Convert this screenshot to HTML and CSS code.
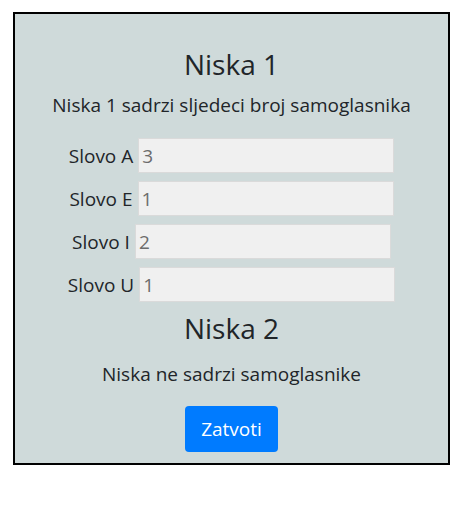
FILE: index.html
```html
<!DOCTYPE html>
<html>
<head>
<meta charset="utf-8">
<link rel="stylesheet" href="styles.css">
</head>
<body>
<div class="box">
  <h3 class="title">Niska 1</h3>
  <p class="text">Niska 1 sadrzi sljedeci broj samoglasnika</p>
  <div class="rows">
    <div class="row"><label class="lbl">Slovo A</label><input class="inp" value="3" readonly></div>
    <div class="row"><label class="lbl">Slovo E</label><input class="inp" value="1" readonly></div>
    <div class="row"><label class="lbl">Slovo I</label><input class="inp" value="2" readonly></div>
    <div class="row"><label class="lbl">Slovo U</label><input class="inp" value="1" readonly></div>
  </div>
  <h3 class="title title2">Niska 2</h3>
  <p class="text text2">Niska ne sadrzi samoglasnike</p>
  <button class="btn">Zatvoti</button>
</div>
</body>
</html>
```
FILE: styles.css
```css
* { box-sizing: border-box; }
body {
  margin: 0;
  padding: 12px 0 0 13px;
  background: #fff;
  font-family: "Open Sans", "Noto Sans", sans-serif;
  color: #212529;
}
.box {
  width: 437px;
  height: 453px;
  border: 2px solid #000;
  background: #cfdada;
  display: flex;
  flex-direction: column;
  align-items: center;
  padding-top: 33px;
}
.title {
  margin: 0;
  font-size: 28px;
  font-weight: 400;
  line-height: 34px;
}
.text {
  margin: 11px 0 0;
  font-size: 19px;
  line-height: 26px;
}
.rows {
  margin-top: 20px;
  display: flex;
  flex-direction: column;
  gap: 8px;
}
.row {
  display: flex;
  align-items: center;
  justify-content: center;
  gap: 5px;
}
.lbl {
  font-size: 19px;
}
.inp {
  width: 256px;
  height: 35px;
  border: 1px solid #dadada;
  background: #f0f0f0;
  font-family: inherit;
  font-size: 19px;
  color: #6c6c6c;
  padding: 0 3px;
  outline: none;
}
.title2 { margin-top: 9px; }
.text2 { margin-top: 16px; }
.btn {
  margin-top: 19px;
  width: 93px;
  height: 46px;
  border: none;
  border-radius: 4px;
  background: #007bff;
  color: #fff;
  font-family: inherit;
  font-size: 19px;
}
```
